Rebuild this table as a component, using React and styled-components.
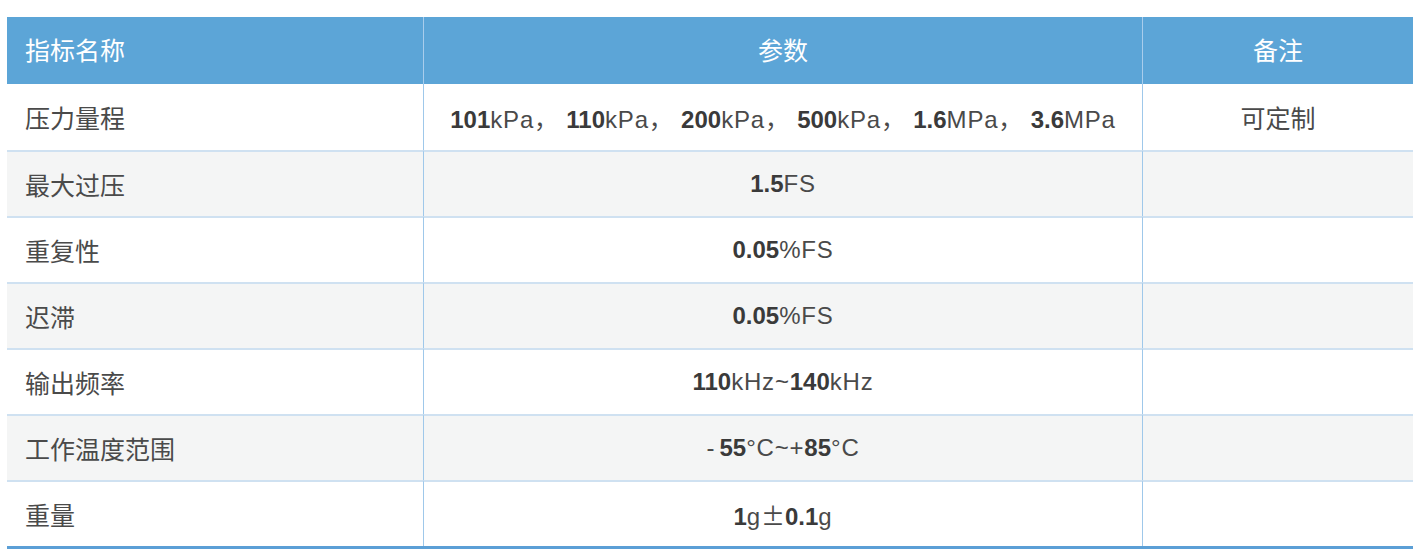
import React from "react";
import styled, { createGlobalStyle } from "styled-components";

const GlobalStyle = createGlobalStyle`
  body {
    margin: 0;
    background: #fff;
    font-family: "Liberation Sans", "Noto Sans CJK SC", sans-serif;
  }
`;

const Page = styled.div`
  padding: 17px 9px 0 7px;
`;

const Table = styled.div`
  display: grid;
  grid-template-columns: 416px 719px 1fr;
  border-bottom: 3px solid #5b9fd6;
`;

const HeadCell = styled.div`
  height: 67px;
  padding-bottom: 3px;
  display: flex;
  align-items: center;
  justify-content: ${(p) => (p.$left ? "flex-start" : "center")};
  padding-left: ${(p) => (p.$left ? "18px" : "0")};
  background: #5ca5d7;
  color: #fff;
  font-family: "Noto Sans CJK SC", sans-serif;
  font-size: 25px;
  font-weight: 400;
  border-left: ${(p) => (p.$first ? "none" : "1px solid #a9cdec")};
  box-sizing: border-box;
`;

const Cell = styled.div`
  height: 66px;
  display: flex;
  align-items: center;
  justify-content: ${(p) => (p.$left ? "flex-start" : "center")};
  padding-left: ${(p) => (p.$left ? "18px" : "0")};
  background: ${(p) => (p.$alt ? "#f4f5f5" : "#fff")};
  color: #4a4a4a;
  font-size: 25px;
  border-top: ${(p) => (p.$top ? "none" : "2px solid #cfe1f1")};
  border-left: ${(p) => (p.$first ? "none" : "1px solid #9fc8ea")};
  box-sizing: border-box;
  white-space: pre;
`;

const Name = styled.span`
  font-family: "Noto Sans CJK SC", sans-serif;
`;

const Value = styled.span`
  font-size: 24px;
`;

const Num = styled.b`
  font-weight: 700;
  color: #3a3a3a;
`;

const Unit = styled.span`
  letter-spacing: 0.8px;
`;

const Dash = styled.span`
  margin-right: 5px;
`;

const rows = [
  {
    name: "压力量程",
    value: [["101", "kPa， "], ["110", "kPa， "], ["200", "kPa， "], ["500", "kPa， "], ["1.6", "MPa， "], ["3.6", "MPa"]],
    note: "可定制",
  },
  { name: "最大过压", value: [["1.5", "FS"]] },
  { name: "重复性", value: [["0.05", "%FS"]] },
  { name: "迟滞", value: [["0.05", "%FS"]] },
  { name: "输出频率", value: [["110", "kHz~"], ["140", "kHz"]] },
  { name: "工作温度范围", value: [["", "-"], ["55", "°C~+"], ["85", "°C"]] },
  { name: "重量", value: [["1", "g"], ["", "±"], ["0.1", "g"]] },
];

function Part({ n, u }) {
  let unit = <Unit>{u}</Unit>;
  if (u === "±") unit = <Name>{u}</Name>;
  if (u === "-") unit = <Dash>{u}</Dash>;
  return (
    <>
      {n && <Num>{n}</Num>}
      {unit}
    </>
  );
}

export default function App() {
  return (
    <>
      <GlobalStyle />
      <Page>
        <Table>
          <HeadCell $left $first>指标名称</HeadCell>
          <HeadCell>参数</HeadCell>
          <HeadCell>备注</HeadCell>
          {rows.map((r, i) => (
            <React.Fragment key={r.name}>
              <Cell $left $first $alt={i % 2 === 1} $top={i === 0}>
                <Name>{r.name}</Name>
              </Cell>
              <Cell $alt={i % 2 === 1} $top={i === 0}>
                <Value>
                  {r.value.map(([n, u], j) => (
                    <Part key={j} n={n} u={u} />
                  ))}
                </Value>
              </Cell>
              <Cell $alt={i % 2 === 1} $top={i === 0}>
                <Name>{r.note || ""}</Name>
              </Cell>
            </React.Fragment>
          ))}
        </Table>
      </Page>
    </>
  );
}
